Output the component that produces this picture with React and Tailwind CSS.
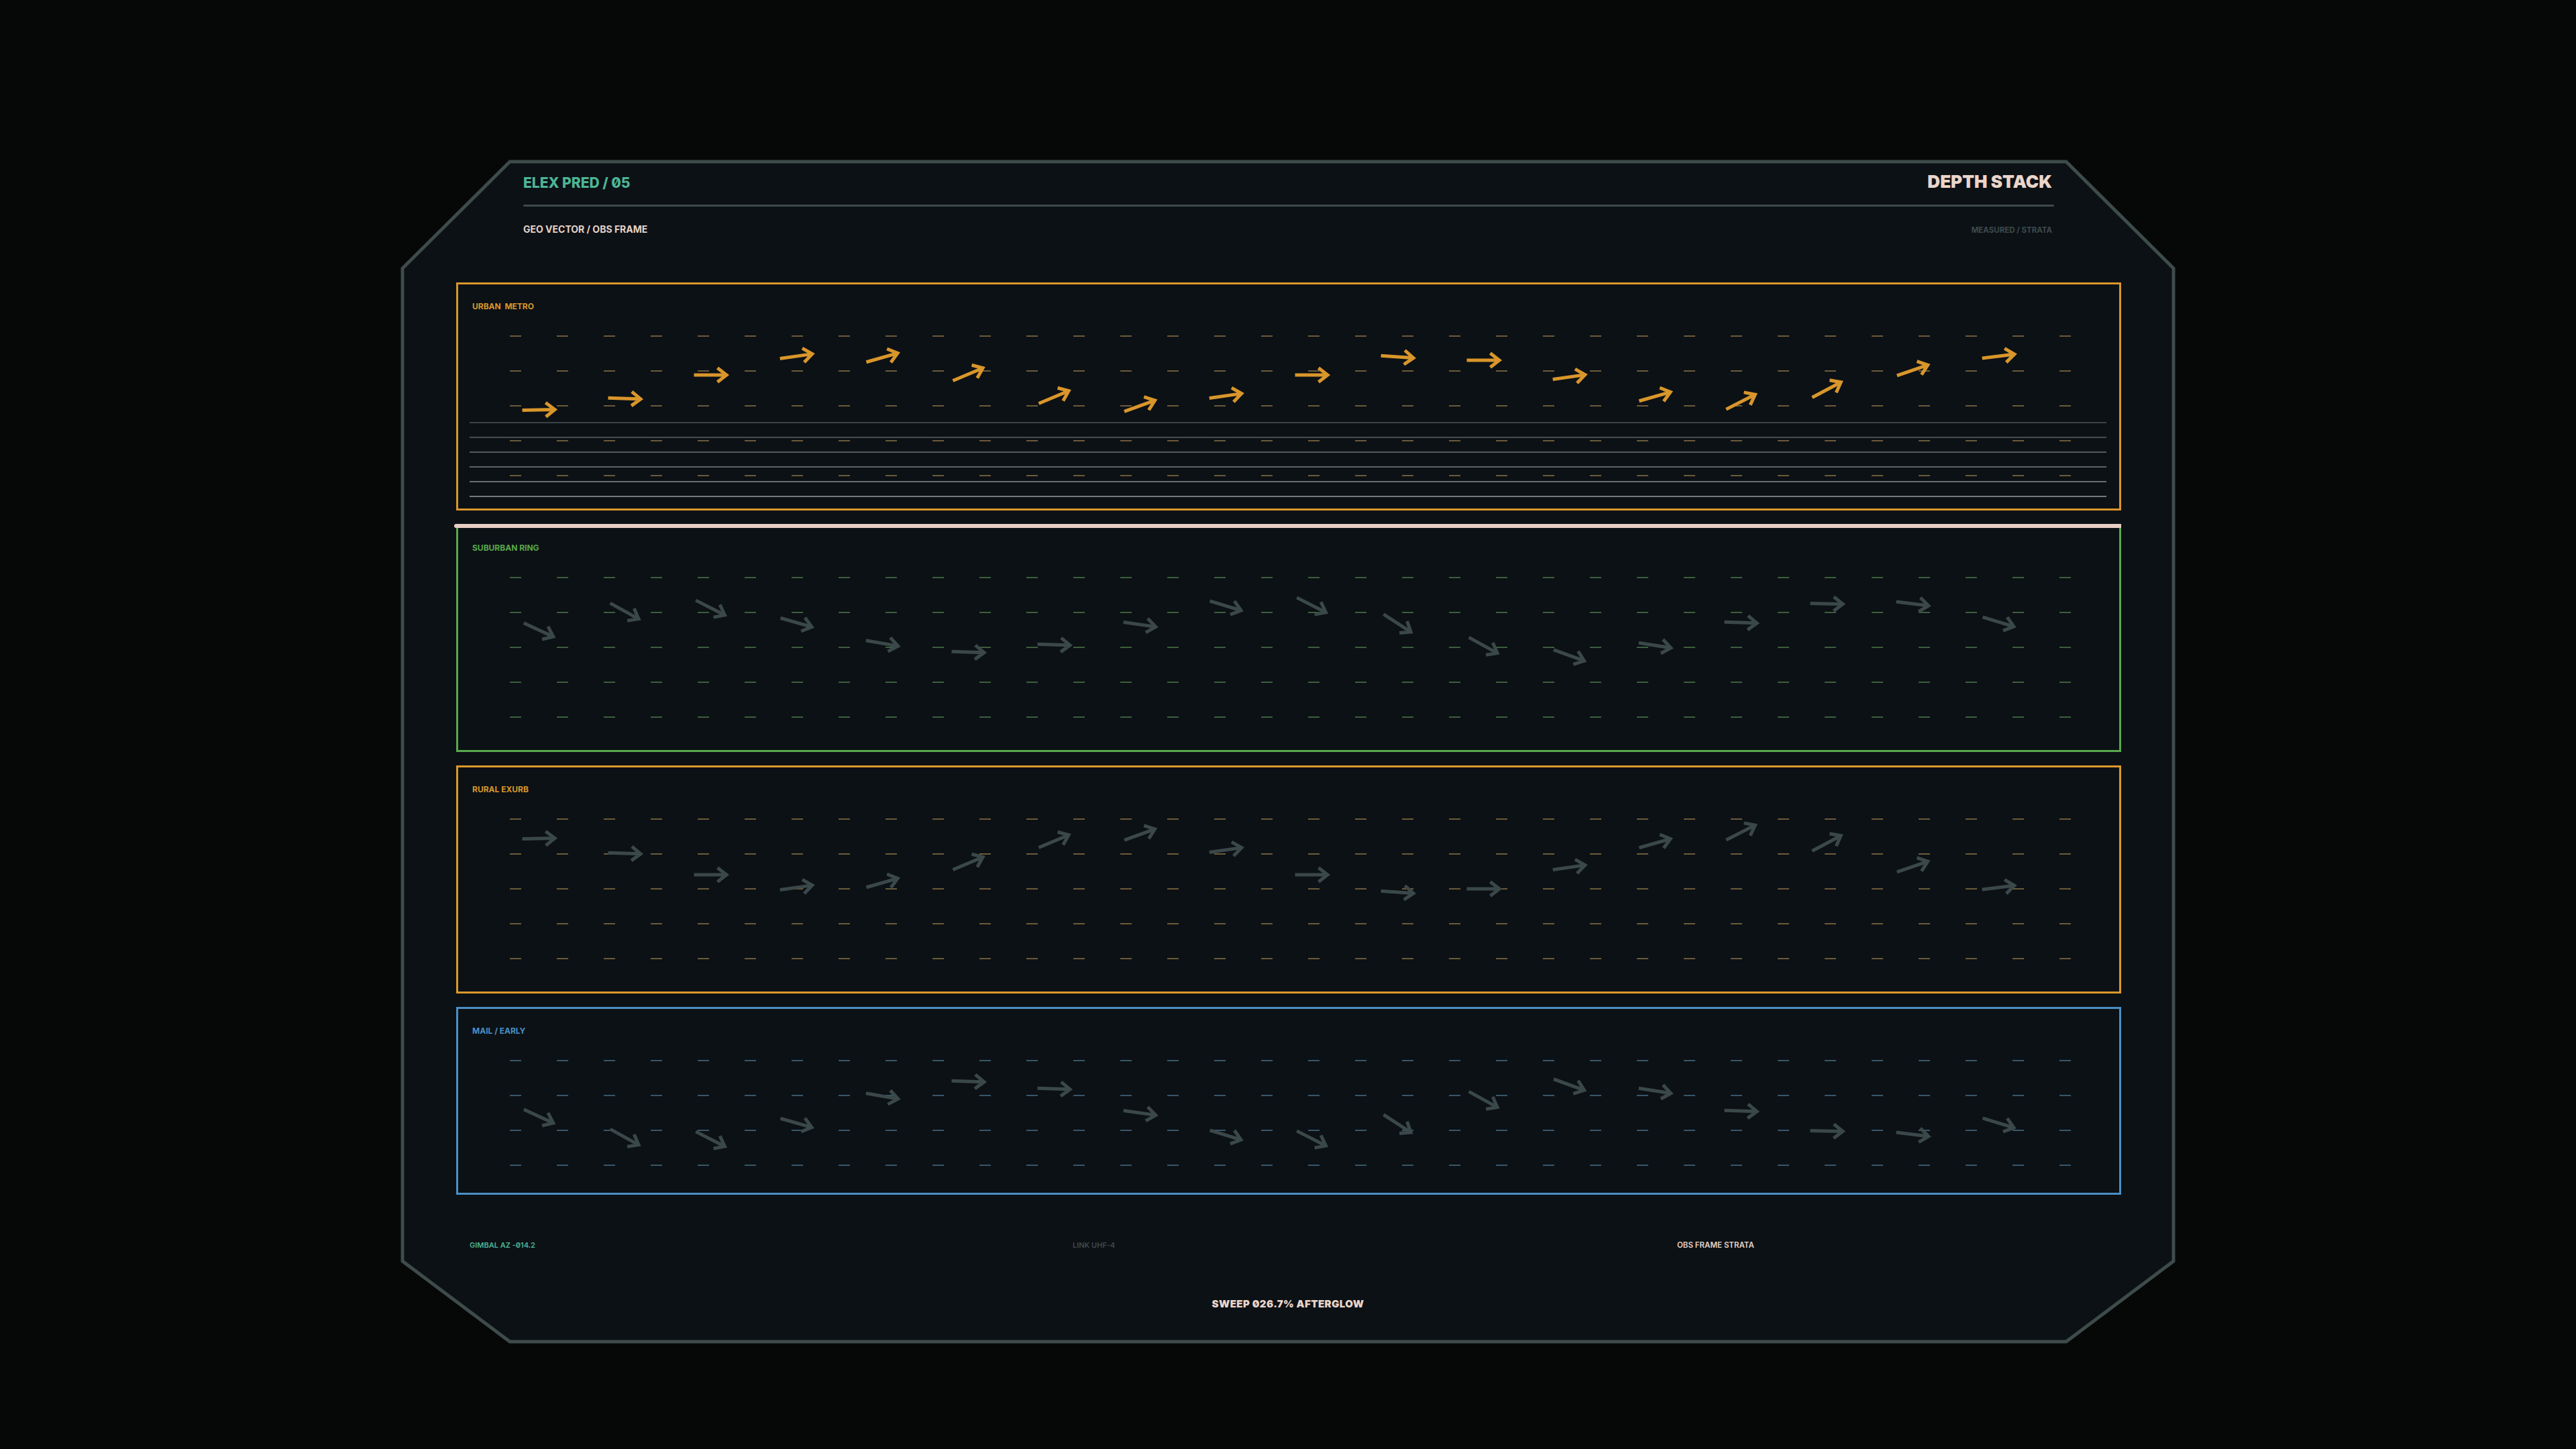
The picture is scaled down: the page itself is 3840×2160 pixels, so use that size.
import React from "react";

const DASH_COLS = Array.from({ length: 34 }, (_, k) => 85.5 + 70 * k);
const ARROW_X = Array.from({ length: 18 }, (_, k) => 120 + 128 * k);

const ANG_A = [-1, 2, 0, -8, -16, -23, -23, -20, -8, 0, 4, 0, -8, -16, -27, -28, -19, -7];
const ANG_B = [25, 29, 27, 16, 10, 2, 2, 8, 17, 27, 33, 29, 20, 9, 2, 1, 7, 17];

const LAYERS = [
  {
    key: "urban",
    label: "URBAN  METRO",
    boxCls: "border-[#d9962b] h-[340px]",
    labelCls: "text-[#d9962b]",
    svgH: 287,
    rows: 5,
    dash: "#6b5a3a",
    arrow: "#d9962b",
    angles: ANG_A,
    ys: [140, 123, 88, 60, 62, 87, 121, 134, 119, 88, 61, 66, 91, 120, 128, 110, 81, 60],
    lines: true,
  },
  {
    key: "suburban",
    label: "SUBURBAN RING",
    boxCls: "border-[#58a84c] h-[340px]",
    labelCls: "text-[#58a84c]",
    svgH: 287,
    rows: 5,
    dash: "#3c5e3c",
    arrow: "#3b4849",
    angles: ANG_B,
    ys: [108, 80, 75, 97, 128, 141, 130, 100, 72, 71, 98, 131, 146, 131, 97, 69, 69, 96],
    bar: true,
  },
  {
    key: "rural",
    label: "RURAL EXURB",
    boxCls: "border-[#dc982a] h-[340px]",
    labelCls: "text-[#d9962b]",
    svgH: 287,
    rows: 5,
    dash: "#6b5a3a",
    arrow: "#3b4849",
    angles: ANG_A,
    ys: [59, 81, 113, 132, 125, 96, 63, 53, 76, 113, 139, 134, 102, 66, 50, 66, 101, 132],
  },
  {
    key: "mail",
    label: "MAIL / EARLY",
    boxCls: "border-[#4a8fc4] h-[280px]",
    labelCls: "text-[#4a8fc4]",
    svgH: 227,
    rows: 4,
    dash: "#38566a",
    arrow: "#3b4849",
    angles: ANG_B,
    ys: [113, 144, 147, 123, 83, 61, 72, 108, 141, 146, 124, 88, 66, 75, 105, 135, 140, 123],
  },
];

const LINE_COLORS = ["#4b5254", "#5b6163", "#6b7072", "#7c7f80", "#8c8e8e", "#9c9d9c"];

function Arrow({ x, y, a, color }) {
  return (
    <g transform={`translate(${x} ${y}) rotate(${a})`}>
      <path
        d="M-24.5 0 H22.5 M10.5 -10.5 L24 0 L10.5 10.5"
        fill="none"
        stroke={color}
        strokeWidth="5"
        strokeLinecap="butt"
        strokeLinejoin="miter"
      />
    </g>
  );
}

function Field({ layer }) {
  const rows = Array.from({ length: layer.rows }, (_, j) => 30 + 52 * j);
  return (
    <svg width="2476" height={layer.svgH} viewBox={`0 0 2476 ${layer.svgH}`} className="block">
      {layer.lines &&
        LINE_COLORS.map((c, i) => (
          <line key={i} x1="17" x2="2457" y1={159 + 22 * i} y2={159 + 22 * i} stroke={c} strokeWidth="1.6" />
        ))}
      {rows.map((ry) =>
        DASH_COLS.map((cx) => (
          <line key={`${ry}-${cx}`} x1={cx - 8.5} x2={cx + 8.5} y1={ry} y2={ry} stroke={layer.dash} strokeWidth="2" />
        ))
      )}
      {ARROW_X.map((ax, k) => (
        <Arrow key={k} x={ax} y={layer.ys[k]} a={layer.angles[k]} color={layer.arrow} />
      ))}
    </svg>
  );
}

function LayerBox({ layer }) {
  return (
    <div className={`relative w-[2482px] border-[3px] ${layer.boxCls} flex flex-col`}>
      {layer.bar && (
        <div className="absolute -top-[3px] -left-[6px] -right-[3px] h-[6px] rounded-l-full bg-[#e8cfc4]" />
      )}
      <div className="h-[47px] pt-[27px] pl-[21px]">
        <span className={`block whitespace-pre text-[12px] leading-none font-bold ${layer.labelCls}`}>
          {layer.label}
        </span>
      </div>
      <Field layer={layer} />
    </div>
  );
}

export default function App() {
  return (
    <div className="w-[3840px] h-[2160px] bg-[#060808] overflow-hidden flex justify-center pt-[240px] font-[Inter,'Noto_Sans',sans-serif] [font-feature-settings:'zero']">
      <div className="relative w-[2640px] h-[1760px]">
        <svg
          className="absolute inset-0 overflow-visible"
          width="2640"
          height="1760"
          viewBox="0 0 2640 1760"
        >
          <polygon
            points="160,1 2480,1 2640,160 2640,1640 2480,1760 160,1760 0,1640 0,160"
            fill="#0c1115"
            stroke="#3e4b4b"
            strokeWidth="5"
            strokeLinejoin="miter"
          />
        </svg>

        <div className="relative flex flex-col">
          <div className="pl-[180px] pr-[181px] pt-[18px]">
            <div className="flex items-baseline justify-between">
              <span className="text-[21px] leading-none font-extrabold text-[#4db596]">ELEX PRED / 05</span>
              <span className="text-[26px] leading-none font-black text-[#ead5ca]">DEPTH STACK</span>
            </div>
            <div className="mt-[21px] h-[3px] rounded-full bg-[#3e4b4b] -mr-[3px]" />
            <div className="mt-[27px] flex items-baseline justify-between">
              <span className="text-[14px] leading-none font-bold text-[#e6d2c7]">GEO VECTOR / OBS FRAME</span>
              <span className="text-[11.5px] leading-none font-bold text-[#3d4a4b]">MEASURED / STRATA</span>
            </div>
          </div>

          <div className="mt-[71px] pl-[80px] flex flex-col gap-[20px]">
            {LAYERS.map((l) => (
              <LayerBox key={l.key} layer={l} />
            ))}
          </div>

          <div className="mt-[70px] pl-[100px] flex">
            <span className="w-[899px] text-[11px] leading-none font-semibold text-[#4db596]">GIMBAL AZ -014.2</span>
            <span className="w-[901px] text-[11px] leading-none font-semibold text-[#3d4a4b]">LINK UHF-4</span>
            <span className="text-[11.5px] leading-none font-semibold text-[#e6d2c7]">OBS FRAME STRATA</span>
          </div>

          <div className="mt-[69px] text-center">
            <span className="text-[15px] leading-none font-black tracking-[0.03em] text-[#ead5ca]">
              SWEEP 026.7% AFTERGLOW
            </span>
          </div>
        </div>
      </div>
    </div>
  );
}
